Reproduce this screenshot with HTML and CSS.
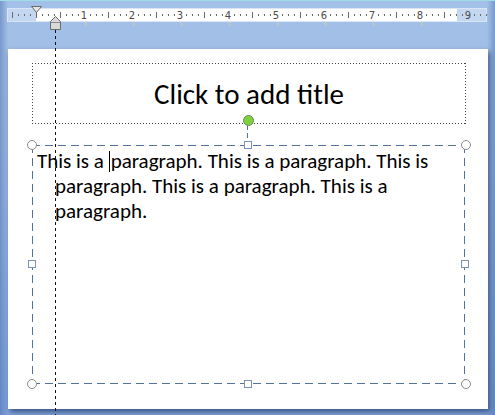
FILE: index.html
```html
<!DOCTYPE html>
<html>
<head>
<meta charset="utf-8">
<link rel="stylesheet" href="styles.css">
</head>
<body>
<div class="topline"></div>
<div class="ruler-wrap">
  <svg class="ruler" width="480" height="18" viewBox="0 0 480 18">
    <defs>
      <pattern id="dots" x="5" y="0" width="6" height="14" patternUnits="userSpaceOnUse">
        <rect x="0" y="6" width="1" height="2" fill="#6a6a6a"/>
      </pattern>
      <pattern id="halves" x="5" y="0" width="24" height="14" patternUnits="userSpaceOnUse">
        <rect x="0" y="4" width="1" height="6" fill="#6a6a6a"/>
      </pattern>
      <pattern id="tabs" x="77" y="0" width="48" height="18" patternUnits="userSpaceOnUse">
        <rect x="0" y="14" width="3" height="4" fill="#b9c3cf"/>
      </pattern>
    </defs>
    <rect x="0" y="0" width="480" height="14" fill="#c4d7f1"/>
    <rect x="29" y="0" width="421" height="14" fill="#ffffff"/>
    <rect x="0.5" y="0.5" width="479" height="13" fill="none" stroke="#d9e5f5"/>
    <rect x="0" y="0" width="480" height="14" fill="url(#dots)"/>
    <rect x="0" y="0" width="480" height="14" fill="url(#halves)"/>
    <rect x="76" y="0" width="350" height="18" fill="url(#tabs)"/>
    <g class="nums">
      <rect x="72" y="2" width="10" height="10" fill="#fff"/>
      <rect x="120" y="2" width="10" height="10" fill="#fff"/>
      <rect x="168" y="2" width="10" height="10" fill="#fff"/>
      <rect x="216" y="2" width="10" height="10" fill="#fff"/>
      <rect x="264" y="2" width="10" height="10" fill="#fff"/>
      <rect x="312" y="2" width="10" height="10" fill="#fff"/>
      <rect x="360" y="2" width="10" height="10" fill="#fff"/>
      <rect x="408" y="2" width="10" height="10" fill="#fff"/>
      <rect x="456" y="2" width="10" height="10" fill="#c4d7f1"/>
      <text x="77" y="11">1</text>
      <text x="125" y="11">2</text>
      <text x="173" y="11">3</text>
      <text x="221" y="11">4</text>
      <text x="269" y="11">5</text>
      <text x="317" y="11">6</text>
      <text x="365" y="11">7</text>
      <text x="413" y="11">8</text>
      <text x="461" y="11">9</text>
    </g>
  </svg>
  <svg class="indent-first" width="11" height="10" viewBox="0 0 11 10">
    <path d="M0.5 0.5 H10.5 L5.5 6.5 Z" fill="#e6e6e6" stroke="#6b6b6b"/>
    <rect x="5" y="6" width="1" height="3" fill="#6b6b6b"/>
  </svg>
  <svg class="indent-hang" width="11" height="14" viewBox="0 0 11 14">
    <path d="M0.5 5.5 L5.5 0.5 L10.5 5.5 V13.5 H0.5 Z" fill="#d9d9d9" stroke="#6b6b6b"/>
    <rect x="1" y="6" width="9" height="1" fill="#8a8a8a"/>
  </svg>
</div>

<div class="slide">
  <div class="title-ph"><span>Click to add title</span></div>
  <div class="body-ph">
    <p class="para">This is a <span class="caret"></span>paragraph. This is a paragraph. This is<br>paragraph. This is a paragraph. This is a<br>paragraph.</p>
    <span class="stem"></span>
    <span class="rotate"></span>
    <span class="h circ tl"></span>
    <span class="h circ tr"></span>
    <span class="h circ bl"></span>
    <span class="h circ br"></span>
    <span class="h sq tm"></span>
    <span class="h sq bm"></span>
    <span class="h sq ml"></span>
    <span class="h sq mr"></span>
  </div>
</div>
<div class="guide"></div>
</body>
</html>
```

FILE: styles.css
```css
html, body {
  margin: 0;
  padding: 0;
}
body {
  width: 495px;
  height: 415px;
  overflow: hidden;
  position: relative;
  background:
    linear-gradient(90deg, rgba(40, 80, 150, 0.35) 0, rgba(40, 80, 150, 0) 8px, rgba(40, 80, 150, 0) 487px, rgba(40, 80, 150, 0.35) 100%),
    linear-gradient(180deg, #a3c0e8 0, #9cbae4 40%, #7fa3d9 100%);
  font-family: "Carlito", "Lato", sans-serif;
}
.topline {
  height: 1px;
  background: #9fdde6;
}
.ruler-wrap {
  position: relative;
  margin: 7px 0 0 7px;
  width: 480px;
  height: 18px;
}
.ruler {
  display: block;
}
.ruler text {
  font-family: "DejaVu Sans", sans-serif;
  font-size: 10px;
  fill: #4a4a4a;
  text-anchor: middle;
}
.indent-first {
  position: absolute;
  left: 24px;
  top: -2px;
}
.indent-hang {
  position: absolute;
  left: 43px;
  top: 8px;
}
.slide {
  position: relative;
  margin: 23px 0 0 8px;
  width: 480px;
  height: 360px;
  box-sizing: border-box;
  background: #fff;
  box-shadow: 2px 3px 5px rgba(25, 45, 90, 0.65);
  padding: 14px 0 0 24px;
  display: flex;
  flex-direction: column;
  gap: 21px;
}
.title-ph {
  width: 434px;
  height: 61px;
  box-sizing: border-box;
  display: flex;
  align-items: center;
  justify-content: center;
  padding-top: 1px;
  background:
    repeating-linear-gradient(90deg, #444 0 1px, transparent 1px 3px) top / 100% 1px no-repeat,
    repeating-linear-gradient(90deg, #444 0 1px, transparent 1px 3px) bottom / 100% 1px no-repeat,
    repeating-linear-gradient(180deg, #444 0 1px, transparent 1px 3px) left / 1px 100% no-repeat,
    repeating-linear-gradient(180deg, #444 0 1px, transparent 1px 3px) right / 1px 100% no-repeat;
}
.title-ph span {
  font-size: 29px;
  color: #000;
  line-height: 1;
}
.body-ph {
  position: relative;
  width: 433px;
  height: 239px;
  box-sizing: border-box;
  padding: 4px 5px 0 23px;
  background:
    repeating-linear-gradient(90deg, #52729a 0 8px, transparent 8px 13px) top / 100% 1px no-repeat,
    repeating-linear-gradient(90deg, #52729a 0 8px, transparent 8px 13px) bottom / 100% 1px no-repeat,
    repeating-linear-gradient(180deg, #52729a 0 8px, transparent 8px 13px) left / 1px 100% no-repeat,
    repeating-linear-gradient(180deg, #52729a 0 8px, transparent 8px 13px) right / 1px 100% no-repeat;
}
.para {
  margin: 0;
  font-size: 21px;
  line-height: 25px;
  text-indent: -18px;
  white-space: nowrap;
  color: #000;
}
.caret {
  display: inline-block;
  width: 1px;
  height: 21px;
  background: #000;
  vertical-align: -4px;
  margin-right: 1px;
}
.h {
  position: absolute;
  box-sizing: border-box;
  background: #fff;
}
.circ {
  width: 10px;
  height: 10px;
  border-radius: 50%;
  border: 1px solid #8c8c8c;
}
.sq {
  width: 8px;
  height: 8px;
  border: 1px solid #7a94b8;
}
.tl { left: -5px; top: -5px; }
.tr { right: -6px; top: -5px; }
.bl { left: -5px; bottom: -5px; }
.br { right: -6px; bottom: -5px; }
.tm { left: 212px; top: -4px; }
.bm { left: 212px; bottom: -4px; }
.ml { left: -4px; top: 115px; }
.mr { right: -4px; top: 115px; }
.stem {
  position: absolute;
  left: 215px;
  top: -20px;
  width: 1px;
  height: 16px;
  background: repeating-linear-gradient(180deg, #52729a 0 5px, transparent 5px 8px);
}
.rotate {
  position: absolute;
  left: 211px;
  top: -30px;
  width: 11px;
  height: 11px;
  box-sizing: border-box;
  border-radius: 50%;
  background: #7fd13b;
  border: 1px solid #6b8f5a;
}
.guide {
  position: absolute;
  left: 55px;
  top: 30px;
  width: 1px;
  height: 385px;
  background: repeating-linear-gradient(180deg, #111 0 3px, transparent 3px 6px);
}
```
